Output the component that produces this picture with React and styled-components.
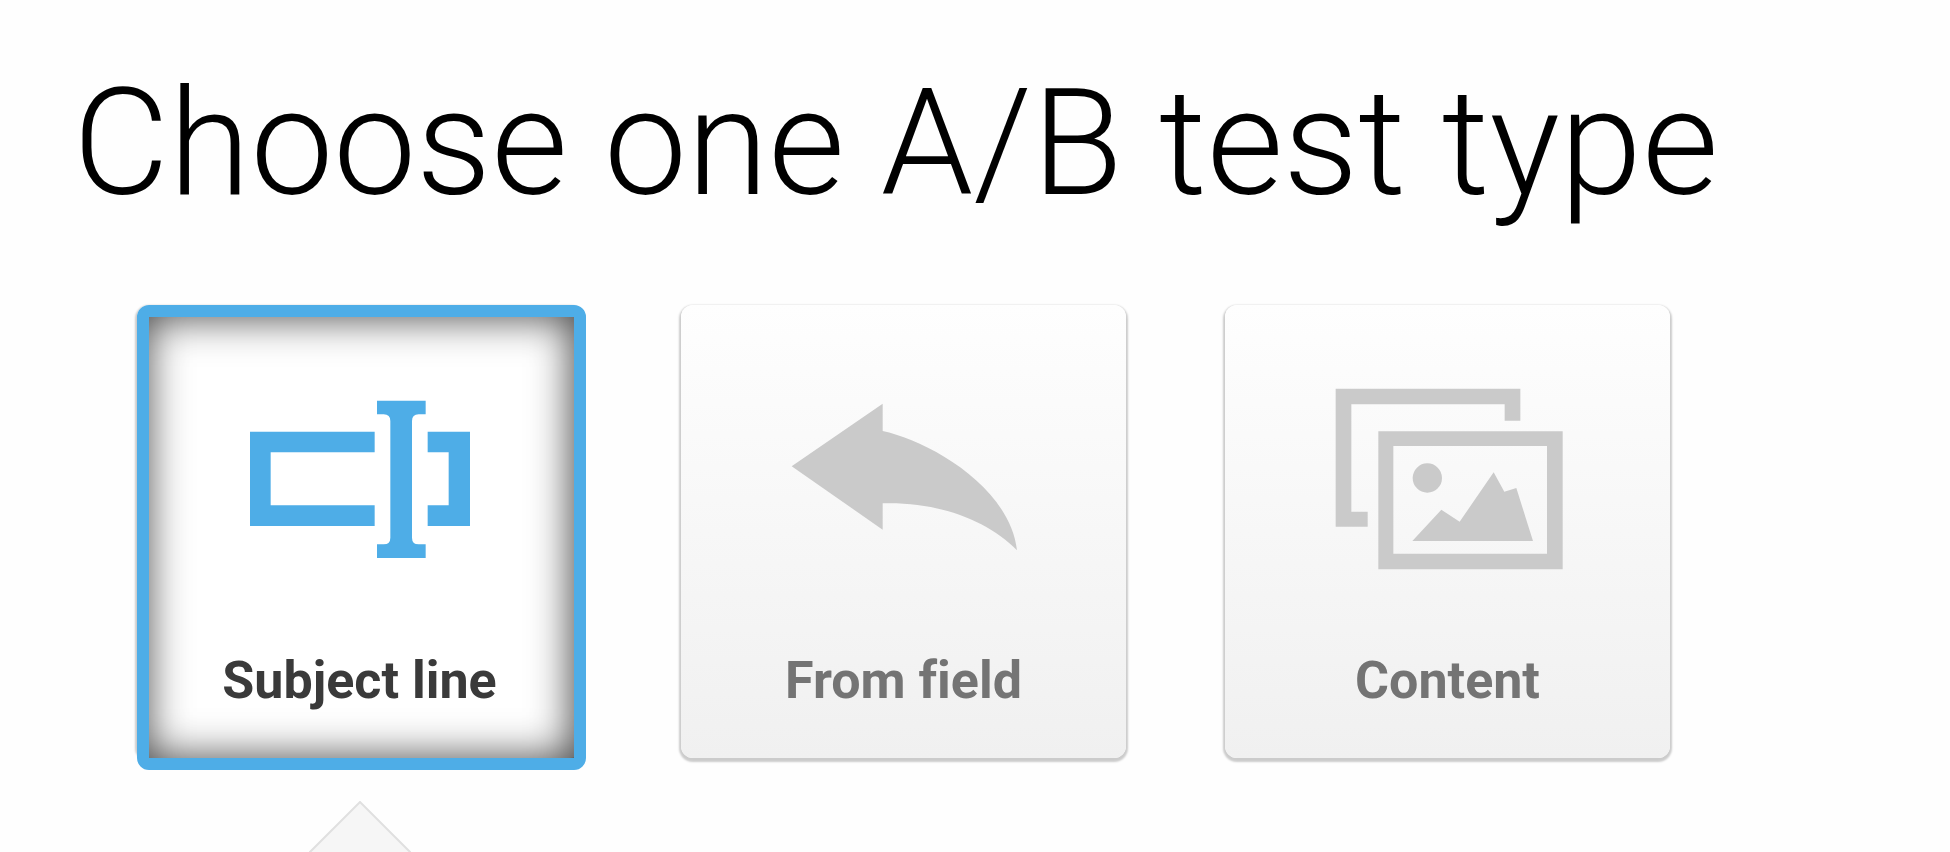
import { useState } from 'react'
import styled, { createGlobalStyle } from 'styled-components'

const SubjectIcon = () => (
  <Icon viewBox='0 0 720 600' aria-hidden='true'>
    <path d='M30 155H404V217H92V376H404V438H30Z' />
    <path d='M563 155H690V438H563V376H626V217H563Z' />
    <path d='M411 62H557V103H536Q516 103 516 123V473Q516 493 536 493H557V534H411V493H431Q451 493 451 473V123Q451 103 431 103H411Z' />
  </Icon>
)

const FromIcon = () => (
  <Icon viewBox='0 0 720 600' aria-hidden='true'>
    <path d='M23 259L296 71V153C426 180 676 315 699 511C611 420 461 365 296 370V449Z' />
  </Icon>
)

const ContentIcon = () => (
  <Icon viewBox='0 0 720 600' aria-hidden='true'>
    <path d='M23 26H577V122H530V73H70V395H119V440H23Z' />
    <path
      fillRule='evenodd'
      d='M151 154H704V568H151ZM196 198V521H657V198Z'
    />
    <circle cx='298' cy='294' r='44' />
    <path d='M253 483L340 389L395 425L497 277L529 335L565 324L615 483Z' />
  </Icon>
)

const types = [
  { id: 'subject', label: 'Subject line', icon: SubjectIcon },
  { id: 'from', label: 'From field', icon: FromIcon },
  { id: 'content', label: 'Content', icon: ContentIcon },
]

const App = () => {
  const [selected, setSelected] = useState('subject')
  const column = types.findIndex((type) => type.id === selected) + 1

  return (
    <Page>
      <GlobalStyle />
      <Title>Choose one A/B test type</Title>
      <Types>
        {types.map(({ id, label, icon: TypeIcon }) => (
          <TypeButton
            key={id}
            type='button'
            $active={id === selected}
            aria-pressed={id === selected}
            onClick={() => setSelected(id)}
          >
            <TypeIcon />
            <Label>{label}</Label>
          </TypeButton>
        ))}
        <Pointer $column={column} viewBox='0 0 102 51' aria-hidden='true'>
          <path d='M0 52L51 1L102 52' />
        </Pointer>
      </Types>
    </Page>
  )
}

export default App

const GlobalStyle = createGlobalStyle`
  * {
    box-sizing: border-box;
  }
  body {
    margin: 0;
    background: #fefefe;
    font-family: Roboto, 'Liberation Sans', sans-serif;
  }
`

const Page = styled.main`
  padding: 56px 73px 0;
`

const Title = styled.h1`
  margin: 0 0 73px;
  font-size: 148px;
  font-weight: 300;
  line-height: 176px;
  color: #000;
`

const Types = styled.div`
  display: grid;
  grid-template-columns: repeat(3, minmax(0, 445px));
  column-gap: 99px;
  row-gap: 43px;
  padding-left: 64px;
`

const Icon = styled.svg`
  width: 240px;
  max-width: 100%;
  height: 200px;
  fill: currentColor;
`

const Label = styled.span`
  font-size: 52px;
  font-weight: 700;
  font-variant-ligatures: none;
  line-height: 60px;
`

const TypeButton = styled.button`
  position: relative;
  display: flex;
  flex-direction: column;
  align-items: center;
  gap: 71px;
  padding: 75px 0 47px;
  border: 0;
  border-radius: 12px;
  font-family: inherit;
  cursor: pointer;
  color: ${({ $active }) => ($active ? '#4eade7' : '#cacaca')};
  background: ${({ $active }) =>
    $active ? '#fff' : 'linear-gradient(#fefefe, #f0f0f0)'};
  box-shadow: 0 2px 2px 2px rgba(0, 0, 0, 0.2);

  ${Label} {
    color: ${({ $active }) => ($active ? '#3a3a3a' : '#747474')};
  }

  /* frame of the chosen type, slightly larger than the button */
  &::before {
    content: '';
    display: ${({ $active }) => ($active ? 'block' : 'none')};
    position: absolute;
    inset: 0 -4px -12px 0;
    border: 12px solid #4eade7;
    border-radius: 12px;
    box-shadow: inset -2px 0 42px rgba(0, 0, 0, 0.75);
  }
`

const Pointer = styled.svg`
  grid-row: 2;
  grid-column: ${({ $column }) => $column};
  justify-self: center;
  display: block;
  width: 102px;
  height: 51px;
  fill: #f6f6f6;
  stroke: #e0e0e0;
  stroke-width: 2px;
`
